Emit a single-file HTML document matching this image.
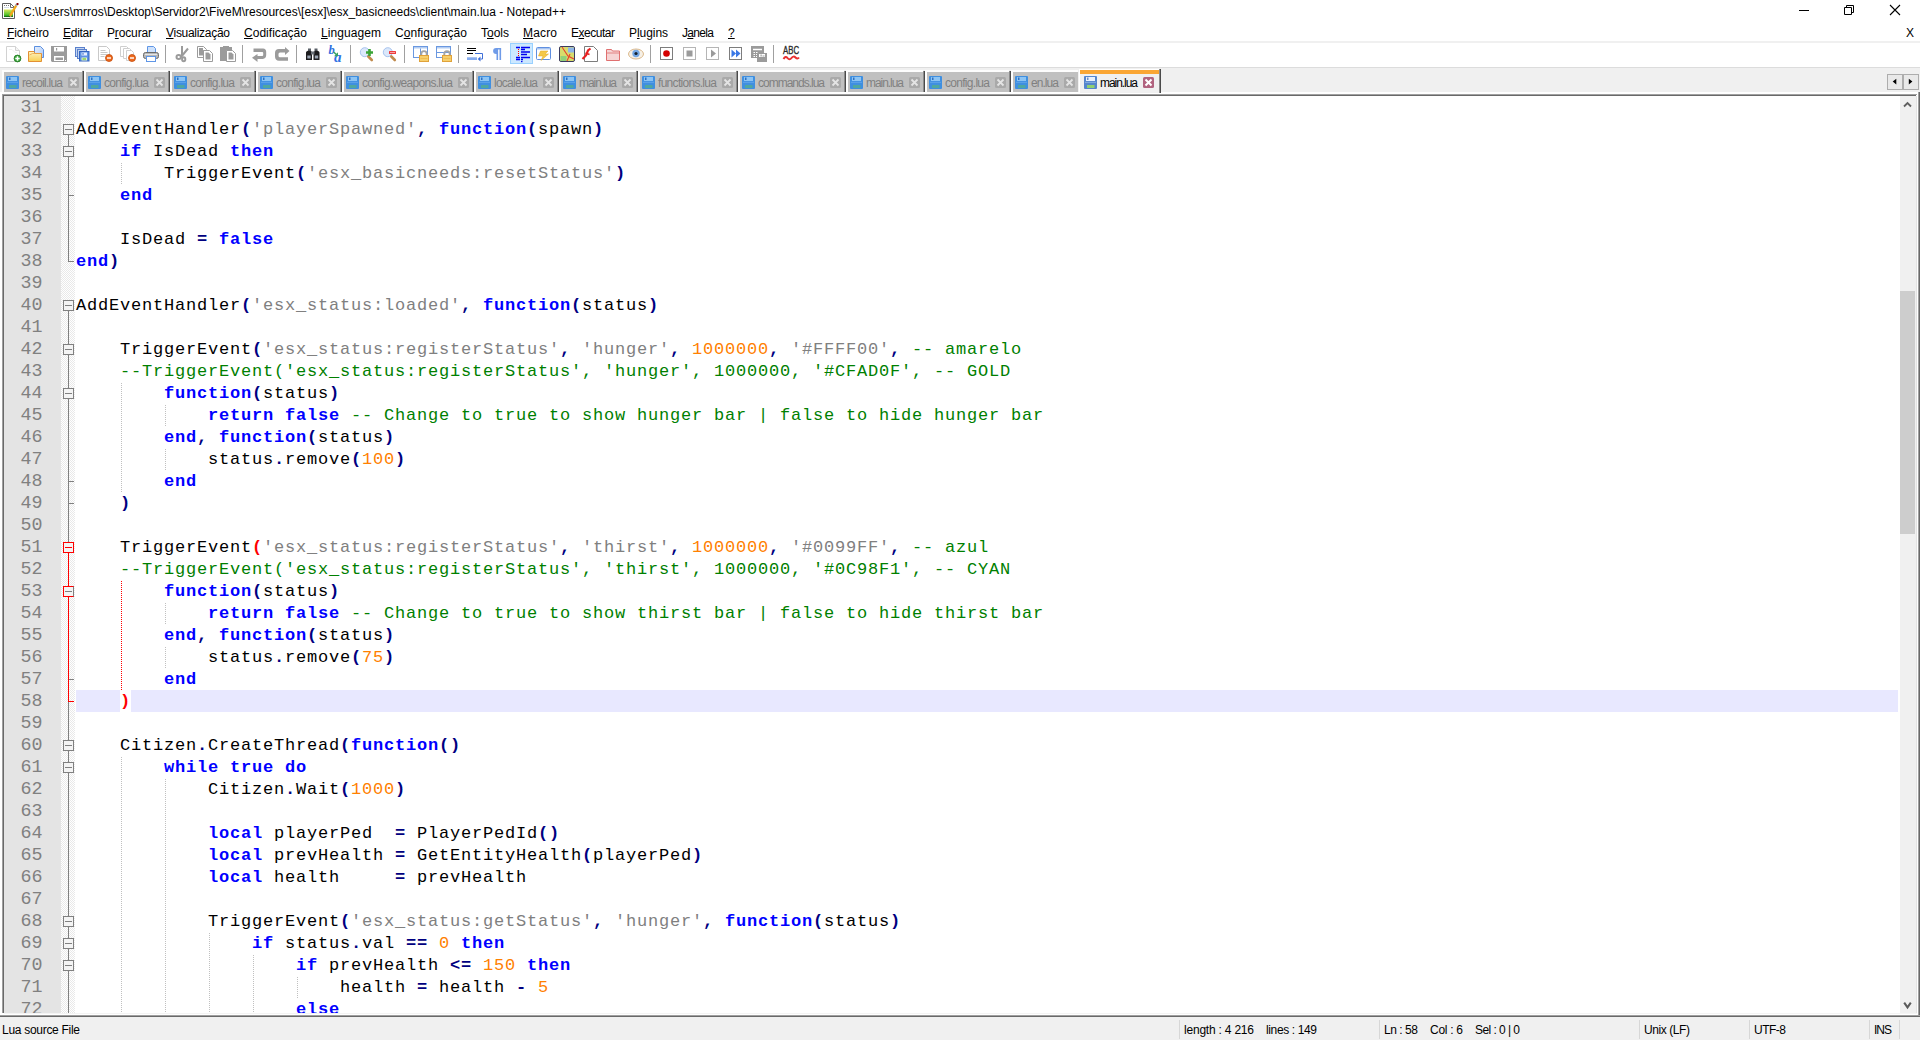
<!DOCTYPE html>
<html><head><meta charset="utf-8"><title>Notepad++</title>
<style>
*{margin:0;padding:0;box-sizing:border-box}
html,body{width:1920px;height:1040px;overflow:hidden;background:#fff}
body{position:relative;font-family:"Liberation Sans",sans-serif;font-size:12px;color:#000}
.a{position:absolute}
.t{position:absolute;white-space:pre;line-height:1}
.ui{font-family:"Liberation Sans",sans-serif;font-size:12px;color:#000}
.tabt{font-family:"Liberation Sans",sans-serif;font-size:12px;color:#808080}
u{text-decoration:underline;text-underline-offset:1px}
.code{position:absolute;left:76px;white-space:pre;font-family:"Liberation Mono",monospace;font-size:17px;line-height:22px;height:22px;color:#000;letter-spacing:0.798px}
.ln{position:absolute;left:4px;width:38.6px;text-align:right;white-space:pre;font-family:"Liberation Mono",monospace;font-size:18.333px;line-height:22px;height:22px;color:#808080}
.k{color:#0000ff;font-weight:bold}
.o{color:#000080;font-weight:bold}
.s{color:#808080}
.n{color:#ff8000}
.c{color:#008000}
.b{color:#ff0000;font-weight:bold}
.ig{position:absolute;width:1px;background-image:repeating-linear-gradient(to bottom,transparent 0,transparent 1px,#c0c0c0 1px,#c0c0c0 2px)}
.igr{position:absolute;width:1px;background-image:repeating-linear-gradient(to bottom,transparent 0,transparent 1px,#ff0000 1px,#ff0000 2px)}
.fb{position:absolute;left:63px;width:11px;height:11px;border:1px solid #808080;background:#f4f4f4}
.fb i{position:absolute;left:1px;top:4px;width:7px;height:1px;background:#808080}
.fbr{border-color:#ff0000}
.fbr i{background:#ff0000}
.fbh{border-color:#ff0000 #808080 #ff0000 #ff0000}
.fv{position:absolute;left:68px;width:1px;background:#808080}
.fh{position:absolute;left:69px;width:5px;height:1px;background:#808080}
.tab{position:absolute;top:72px;height:20px;background:#c0c0c0}
.tx{position:absolute;width:11px;height:11px;top:77px;background:#a9a9a9;border-radius:1.5px}
.sep{position:absolute;top:45px;width:1px;height:18px;background:#a0a0a0}
.ssep{position:absolute;top:1020px;width:1px;height:19px;background:#d7d7d7}
</style></head>
<body>
<!-- title bar -->
<svg class="a" style="left:2px;top:3px" width="17" height="16" viewBox="0 0 17 16"><defs><linearGradient id="gg" x1="0" y1="0" x2="0" y2="1"><stop offset="0" stop-color="#dbe85a"/><stop offset=".75" stop-color="#4cc02a"/><stop offset="1" stop-color="#0a5a0a"/></linearGradient></defs><path d="M0.500 0.500h8l4 4v11h-12z" fill="#fff" stroke="#5c5c5c"/><path d="M8.500 0.500L12.500 4.500H8.500Z" fill="#fff" stroke="#5c5c5c" stroke-width=".9"/><path d="M2 2.500h1M4 2.500h1M6 2.500h1" stroke="#777" stroke-width="1"/><path d="M2 4.500h5" stroke="#d5e0ea"/><rect x="2" y="6.500" width="9" height="7.500" fill="url(#gg)"/><path d="M14.500 2l-6.500 11" stroke="#f2a81a" stroke-width="2.400"/><path d="M8.500 12.500l-1 2.200l2-1.300z" fill="#c8a070"/><path d="M14 2.600l.8-1.300" stroke="#9ab0d8" stroke-width="2.200"/><rect x="14.500" y="0" width="2" height="2" rx=".5" fill="#8c0000"/></svg>
<div class="t ui" style="left:23px;top:6px;letter-spacing:0.001px;">C:\Users\mrros\Desktop\Servidor2\FiveM\resources\[esx]\esx_basicneeds\client\main.lua - Notepad++</div>
<div class="a" style="left:1799px;top:10px;width:10px;height:1px;background:#000"></div>
<svg class="a" style="left:1843px;top:4px" width="12" height="12" viewBox="0 0 12 12"><path d="M1.5 3.5h7v7h-7zM3.5 3.5v-2h7v7h-2" fill="none" stroke="#000" stroke-width="1"/></svg>
<svg class="a" style="left:1889px;top:4px" width="12" height="12" viewBox="0 0 12 12"><path d="M1 1l10 10M11 1L1 11" fill="none" stroke="#000" stroke-width="1.1"/></svg>
<!-- menu bar -->
<div class="t ui" style="left:7px;top:27px;letter-spacing:-0.100px;"><u>F</u>icheiro</div>
<div class="t ui" style="left:63px;top:27px;letter-spacing:-0.272px;"><u>E</u>ditar</div>
<div class="t ui" style="left:107px;top:27px;letter-spacing:-0.147px;">P<u>r</u>ocurar</div>
<div class="t ui" style="left:166px;top:27px;letter-spacing:-0.288px;"><u>V</u>isualização</div>
<div class="t ui" style="left:244px;top:27px;letter-spacing:0.028px;"><u>C</u>odificação</div>
<div class="t ui" style="left:321px;top:27px;letter-spacing:0.074px;"><u>L</u>inguagem</div>
<div class="t ui" style="left:395px;top:27px;letter-spacing:0.054px;">C<u>o</u>nfiguração</div>
<div class="t ui" style="left:481px;top:27px;letter-spacing:-0.008px;">T<u>o</u>ols</div>
<div class="t ui" style="left:523px;top:27px;letter-spacing:0.164px;"><u>M</u>acro</div>
<div class="t ui" style="left:571px;top:27px;letter-spacing:-0.482px;">E<u>x</u>ecutar</div>
<div class="t ui" style="left:629px;top:27px;letter-spacing:-0.062px;">P<u>l</u>ugins</div>
<div class="t ui" style="left:682px;top:27px;letter-spacing:-0.675px;">J<u>a</u>nela</div>
<div class="t ui" style="left:728px;top:27px;letter-spacing:0.000px;"><u>?</u></div>
<div class="t ui" style="left:1906px;top:27px;letter-spacing:0.000px;">X</div>
<div class="a" style="left:0;top:41px;width:1920px;height:2px;background:#f0f0f0"></div>
<!-- toolbar -->
<div class="a" style="left:0;top:67px;width:1920px;height:1px;background:#dcdcdc"></div>
<div class="a" style="left:0;top:68px;width:1920px;height:27px;background:#f0f0f0"></div>
<svg class="a" style="left:6px;top:46px;overflow:visible" width="16" height="16" viewBox="0 0 16 16"><path d="M0.500 0.500h9l4 4v11h-13z" fill="#fff" stroke="#d2d2d2"/><path d="M9.500 0.500v4h4" fill="#f4f4f4" stroke="#d2d2d2"/><path d="M3 3.500h3l3 3h2" fill="none" stroke="#efefef"/><circle cx="11.500" cy="12.500" r="3.400" fill="#3aa93a" stroke="#257a25" stroke-width=".9"/><path d="M11.500 10.300v4.400M9.300 12.500h4.400" stroke="#fff" stroke-width="1.500"/></svg>
<svg class="a" style="left:28px;top:46px;overflow:visible" width="16" height="16" viewBox="0 0 16 16"><defs><linearGradient id="fo" x1="0" y1="0" x2="0" y2="1"><stop offset="0" stop-color="#fdf3c4"/><stop offset="1" stop-color="#f8cf52"/></linearGradient><linearGradient id="pp" x1="0" y1="0" x2="1" y2="1"><stop offset="0" stop-color="#e6effc"/><stop offset="1" stop-color="#a9c6f5"/></linearGradient></defs><path d="M6.500 0.500h6l3 3v8h-9z" fill="url(#pp)" stroke="#5a8fe0"/><path d="M0.500 5.500h5.500l1 2h6.500v8h-13z" fill="url(#fo)" stroke="#e39033"/><path d="M1.500 9l3-1.500h8" fill="none" stroke="#eaa64a" stroke-width=".8"/></svg>
<svg class="a" style="left:51px;top:46px;overflow:visible" width="16" height="16" viewBox="0 0 16 16"><path d="M0 0h16v16h-15l-1-1z" fill="#9b9b9b"/><rect x="3" y="1" width="10" height="4.500" fill="#fff"/><rect x="5" y="2" width="1.200" height="2.500" fill="#9b9b9b"/><rect x="3" y="10" width="10" height="5" fill="#fff"/><rect x="4.500" y="11.500" width="7.500" height="2.500" fill="#9b9b9b"/><rect x="14" y="14" width="1" height="1" fill="#fff"/></svg>
<svg class="a" style="left:75px;top:46px;overflow:visible" width="16" height="16" viewBox="0 0 16 16"><rect x="0.500" y="1.500" width="9" height="9" fill="#c3d4f0" stroke="#5a80cc"/><rect x="2.500" y="3.500" width="9" height="9" fill="#c3d4f0" stroke="#5a80cc"/><rect x="4.500" y="5.500" width="9.500" height="9.500" fill="#5f93e4" stroke="#3464c0"/><rect x="6.500" y="6.500" width="5.500" height="3" fill="#e8f0ff"/><rect x="7.500" y="7" width="1" height="1.800" fill="#3464c0"/><rect x="6.500" y="11.500" width="5.500" height="3" fill="#e4f4c8"/><rect x="7.500" y="12.300" width="3.500" height="1.400" fill="#7cc84a"/></svg>
<svg class="a" style="left:97px;top:46px;overflow:visible" width="16" height="16" viewBox="0 0 16 16"><path d="M1.500 0.500h8l3 3v11h-11z" fill="#fff" stroke="#c9c9c9"/><path d="M3.500 4.500h5M3.500 6.500h7M3.500 8.500h7M3.500 10.500h4" stroke="#c8c8c8"/><circle cx="12" cy="12" r="3.500" fill="#ee6a1e" stroke="#c24a0a" stroke-width=".8"/><path d="M10 12h4" stroke="#fff" stroke-width="1.400"/></svg>
<svg class="a" style="left:120px;top:46px;overflow:visible" width="16" height="16" viewBox="0 0 16 16"><path d="M0.500 0.500h6l2 2v8h-8z" fill="#fff" stroke="#cfcfcf"/><path d="M3.500 2.500h6l2 2v8h-8z" fill="#fff" stroke="#cfcfcf"/><path d="M6.500 4.500h5l2 2v8h-7z" fill="#fff" stroke="#cfcfcf"/><circle cx="12" cy="12" r="3.500" fill="#ee6a1e" stroke="#c24a0a" stroke-width=".8"/><path d="M10 12h4" stroke="#fff" stroke-width="1.400"/></svg>
<svg class="a" style="left:143px;top:46px;overflow:visible" width="16" height="16" viewBox="0 0 16 16"><path d="M4.500 6v-5.500h6l2 2v3.500" fill="#cfe2fb" stroke="#5f96e6"/><rect x="0.500" y="6.500" width="15" height="6" rx="2" fill="#b8b8b8" stroke="#6c6c6c"/><rect x="3.500" y="10.500" width="9" height="5" fill="#fff" stroke="#5f96e6"/><path d="M2 8.500h12" stroke="#e6e6e6"/></svg>
<div class="sep" style="left:165px"></div>
<svg class="a" style="left:175px;top:46px;overflow:visible" width="16" height="16" viewBox="0 0 16 16"><path d="M7 0v9.500M13 2.500l-7 8.500" stroke="#9b9b9b" stroke-width="2" fill="none"/><ellipse cx="3.700" cy="11" rx="2.200" ry="2" fill="#fff" stroke="#9b9b9b" stroke-width="2"/><ellipse cx="8.700" cy="13.300" rx="1.600" ry="2" fill="#fff" stroke="#9b9b9b" stroke-width="2"/></svg>
<svg class="a" style="left:197px;top:46px;overflow:visible" width="16" height="16" viewBox="0 0 16 16"><path d="M0.500 0.500h6l3 3v8h-9z" fill="#fff" stroke="#9b9b9b"/><path d="M2 2h4v2h2v5.500h-6z" fill="#9b9b9b"/><path d="M6.500 4.500h6l3 3v8h-9z" fill="#fff" stroke="#9b9b9b"/><path d="M8.500 6.500h3l2 2v5h-5z" fill="#9b9b9b"/></svg>
<svg class="a" style="left:220px;top:46px;overflow:visible" width="16" height="16" viewBox="0 0 16 16"><path d="M0 1h3v-1h6v1h3v14h-12z" fill="#9b9b9b"/><path d="M6.500 4.500h6l3 3v8h-9z" fill="#fff" stroke="#9b9b9b"/><path d="M8.500 6.500h3l2 2v5h-5z" fill="#9b9b9b"/></svg>
<div class="sep" style="left:242px"></div>
<svg class="a" style="left:252px;top:46px;overflow:visible" width="16" height="16" viewBox="0 0 16 16"><path d="M1.500 2.500h9.500a3.500 3.500 0 0 1 3.200 3.500v3a4 4 0 0 1-3.500 4h-5.700v-3h5.200a1 1 0 0 0 1-1v-2a1 1 0 0 0-1-1h-8.700z" fill="#9b9b9b"/><path d="M5.500 8v8l-5.500-4.300z" fill="#9b9b9b"/></svg>
<svg class="a" style="left:275px;top:46px;overflow:visible" width="16" height="16" viewBox="0 0 16 16"><path d="M10 3h-6a4 4 0 0 0-4 4v3.500a4.300 4.300 0 0 0 4 4.300h9v-3.600h-8a1.500 1.500 0 0 1-1.500-1.500v-1.700a1.500 1.500 0 0 1 1.500-1.500h5z" fill="#9b9b9b"/><path d="M10 0.900v8l4.500-4z" fill="#9b9b9b"/></svg>
<div class="sep" style="left:296px"></div>
<svg class="a" style="left:306px;top:46px;overflow:visible" width="16" height="16" viewBox="0 0 16 16"><path d="M2 2.500h3v2.500h-3zM8.500 2.500h3v2.500h-3z" fill="#5a6068"/><path d="M0 6.500c0-2.500 6-2.500 6 0v7.500h-6zM7.500 6.500c0-2.500 6-2.500 6 0v7.500h-6z" fill="#1c1c1e"/><rect x="5" y="5.500" width="3.500" height="3" fill="#6a7078"/><rect x="1.300" y="9.500" width="3.400" height="3" fill="#9aa4b2"/><rect x="8.800" y="9.500" width="3.400" height="3" fill="#9aa4b2"/></svg>
<svg class="a" style="left:329px;top:46px;overflow:visible" width="16" height="16" viewBox="0 0 16 16"><text x="-0.500" y="8" font-family="Liberation Serif" font-size="12.500" font-weight="bold" font-style="italic" fill="#2f6fe0">b</text><text x="5" y="15.800" font-family="Liberation Serif" font-size="15" font-weight="bold" font-style="italic" fill="#2f72e4">a</text><path d="M4.500 6l3.500 3" stroke="#3aa060" stroke-width="1.600"/><path d="M9 6.300v4h-4z" fill="#3aa060"/></svg>
<div class="sep" style="left:350px"></div>
<svg class="a" style="left:360px;top:46px;overflow:visible" width="16" height="16" viewBox="0 0 16 16"><circle cx="4.800" cy="6.200" r="4.500" fill="#dbe8fb" stroke="#a8c4ee"/><path d="M8.300 10.500l3.500 3.500" stroke="#c08a4c" stroke-width="2.600" stroke-linecap="round"/><path d="M9.500 3v7M6 6.500h7" stroke="#3aa436" stroke-width="2.600"/></svg>
<svg class="a" style="left:383px;top:46px;overflow:visible" width="16" height="16" viewBox="0 0 16 16"><circle cx="4.800" cy="6.200" r="4.500" fill="#dbe8fb" stroke="#a8c4ee"/><path d="M8.300 10.500l3.500 3.500" stroke="#c08a4c" stroke-width="2.600" stroke-linecap="round"/><rect x="6" y="5" width="7" height="3" rx=".5" fill="#ee3a3a"/><path d="M7 6.500h5" stroke="#f6a0a0" stroke-width="1"/></svg>
<div class="sep" style="left:404px"></div>
<svg class="a" style="left:413px;top:46px;overflow:visible" width="16" height="16" viewBox="0 0 16 16"><rect x="0.500" y="0.500" width="14" height="11" fill="#fff" stroke="#6a98e0"/><rect x="1" y="1" width="13" height="1.500" fill="#b4cdf2"/><path d="M7.500 2.500v9" stroke="#6a98e0"/><path d="M8.300 10v-2.200a2.700 2.700 0 0 1 5.400 0v2.200" fill="none" stroke="#a4a4a4" stroke-width="1.900"/><rect x="6.500" y="9.500" width="9" height="6" fill="#f6cf6c" stroke="#e0a23a"/><path d="M7.500 12.500h7" stroke="#f0bc50" stroke-width="1"/></svg>
<svg class="a" style="left:436px;top:46px;overflow:visible" width="16" height="16" viewBox="0 0 16 16"><rect x="0.500" y="0.500" width="14" height="11" fill="#fff" stroke="#6a98e0"/><rect x="1" y="1" width="13" height="1.500" fill="#b4cdf2"/><path d="M1 6.500h13" stroke="#6a98e0"/><path d="M8.300 10v-2.200a2.700 2.700 0 0 1 5.400 0v2.200" fill="none" stroke="#a4a4a4" stroke-width="1.900"/><rect x="6.500" y="9.500" width="9" height="6" fill="#f6cf6c" stroke="#e0a23a"/><path d="M7.500 12.500h7" stroke="#f0bc50" stroke-width="1"/></svg>
<div class="sep" style="left:458px"></div>
<svg class="a" style="left:467px;top:46px;overflow:visible" width="16" height="16" viewBox="0 0 16 16"><g transform="translate(-1,0)"><path d="M1 2.500h9M1 4.500h9M1 7.500h6" stroke="#000" stroke-width="1"/><path d="M9 7.500h7.500v5.500h-2" fill="none" stroke="#3f6fd8"/><path d="M14.500 10.500v5l-2.800-2.500z" fill="#3f6fd8"/><rect x="1" y="11.300" width="10" height="2.700" fill="#86acee"/></g></svg>
<svg class="a" style="left:491px;top:46px;overflow:visible" width="16" height="16" viewBox="0 0 16 16"><path d="M6.300 2.500v11.500M9.300 2.500v11.500" stroke="#6f9be8" stroke-width="1.600"/><path d="M10.100 2h-5a3 3 0 0 0 0 6h1.300v-4.500h3.700z" fill="#6f9be8"/></svg>
<div class="a" style="left:510px;top:43px;width:23px;height:21px;background:#cce8ff;border:1px solid #99d1ff"></div>
<svg class="a" style="left:513px;top:46px;overflow:visible" width="16" height="16" viewBox="0 0 16 16"><g transform="translate(2,0)"><path d="M1 1.500h4M6 1.500h9M6 3.500h4M6 6h9M6 8.500h6M1 11.500h4M6 11.500h9M1 13.500h4M6 13.500h2" stroke="#0000f0" stroke-width="1.500"/><path d="M3.500 3v8" stroke="#f00" stroke-dasharray="1 1"/><rect x="6" y="15" width="1.500" height="1.200" fill="#0000f0"/></g></svg>
<svg class="a" style="left:536px;top:46px;overflow:visible" width="16" height="16" viewBox="0 0 16 16"><rect x="0.500" y="1.500" width="14" height="12" rx="1" fill="#fff" stroke="#5f8fe0"/><rect x="1" y="2" width="13" height="1.500" fill="#a8c4f0"/><path d="M4.500 5h7.500l-3 3h3.500l-7.500 6.500l2-4.500h-4.500z" fill="#f4c848" stroke="#e0a828" stroke-width=".5"/></svg>
<svg class="a" style="left:559px;top:46px;overflow:visible" width="16" height="16" viewBox="0 0 16 16"><rect x="0.500" y="0.500" width="15" height="15" rx="1.500" fill="#d7dc6c" stroke="#3a3a60"/><rect x="9" y="1.500" width="6" height="5" fill="#8fb6e8"/><rect x="1.500" y="10" width="6" height="5" fill="#8fd07a"/><path d="M3 1l6 9l6 3M11 8l-3 7" stroke="#e8402c" stroke-width="1.100" fill="none"/></svg>
<svg class="a" style="left:582px;top:46px;overflow:visible" width="16" height="16" viewBox="0 0 16 16"><path d="M2.500 0.500h9l4 4v11h-13z" fill="#fff" stroke="#7c7c7c"/><path d="M0.500 13l3.500-3.500l2-5l2.500-2" fill="none" stroke="#e82020" stroke-width="2.200"/><path d="M3.500 7l4 1.500" stroke="#e82020" stroke-width="1.500"/></svg>
<svg class="a" style="left:605px;top:46px;overflow:visible" width="16" height="16" viewBox="0 0 16 16"><path d="M1.500 3.500h5l1 1.500h7v9.500h-13z" fill="#f6d4d4" stroke="#e07070"/><path d="M1.500 7h13" stroke="#e07070" stroke-width=".8"/></svg>
<svg class="a" style="left:628px;top:46px;overflow:visible" width="16" height="16" viewBox="0 0 16 16"><ellipse cx="8" cy="8" rx="7.500" ry="5" fill="#f6f0e6" stroke="#dcb98c"/><circle cx="8" cy="7.500" r="3.700" fill="#74a7e4"/><circle cx="8" cy="7.500" r="1.600" fill="#15202c"/></svg>
<div class="sep" style="left:650px"></div>
<svg class="a" style="left:659px;top:46px;overflow:visible" width="16" height="16" viewBox="0 0 16 16"><rect x="1.500" y="1.500" width="12" height="12" fill="#fff" stroke="#7d7d7d" stroke-width="1"/><circle cx="7.500" cy="7.500" r="3.300" fill="#d40000"/></svg>
<svg class="a" style="left:682px;top:46px;overflow:visible" width="16" height="16" viewBox="0 0 16 16"><rect x="1.500" y="1.500" width="12" height="12" fill="#fff" stroke="#b5b5b5" stroke-width="1"/><rect x="4.500" y="4.500" width="6" height="6" fill="#9b9b9b"/></svg>
<svg class="a" style="left:705px;top:46px;overflow:visible" width="16" height="16" viewBox="0 0 16 16"><rect x="1.500" y="1.500" width="12" height="12" fill="#fff" stroke="#b5b5b5" stroke-width="1"/><path d="M6 3.500v8l5-4z" fill="#9b9b9b"/></svg>
<svg class="a" style="left:728px;top:46px;overflow:visible" width="16" height="16" viewBox="0 0 16 16"><rect x="1.500" y="1.500" width="12" height="12" fill="#fff" stroke="#7d7d7d" stroke-width="1"/><path d="M3.500 3.500v8l4.500-4zM8 3.500v8l4.500-4z" fill="#3a78e6"/></svg>
<svg class="a" style="left:751px;top:46px;overflow:visible" width="16" height="16" viewBox="0 0 16 16"><rect x="0" y="0" width="13" height="12" fill="#9b9b9b"/><path d="M2 3.500h9" stroke="#fff" stroke-width="1.500"/><path d="M2.500 6.500h1.500M5 6.500h1.500M2.500 8.500h1.500M5 8.500h1.500M2.500 10.500h1.500M5 10.500h1.500" stroke="#fff" stroke-width="1.200"/><rect x="6" y="7" width="10" height="9" fill="#9b9b9b"/><rect x="8" y="8" width="6" height="3" fill="#fff"/><rect x="9.500" y="8.500" width="1.200" height="2" fill="#9b9b9b"/><rect x="11.500" y="9.500" width="2" height="1" fill="#9b9b9b"/></svg>
<div class="sep" style="left:773px"></div>
<svg class="a" style="left:783px;top:46px;overflow:visible" width="16" height="16" viewBox="0 0 16 16"><text x="0" y="8.300" font-family="Liberation Sans" font-size="11.500" fill="#2a2a2a" stroke="#2a2a2a" stroke-width=".35" textLength="16" lengthAdjust="spacingAndGlyphs">ABC</text><path d="M0.500 13q2-3.500 4 -1t4 0t4-0.500t3.500 0" fill="none" stroke="#e83030" stroke-width="2"/></svg>
<!-- tabs -->
<div class="tab" style="left:4px;width:78px"></div><div class="a" style="left:2px;top:70px;width:80px;height:2px;background:#fdfdfd"></div><div class="a" style="left:2px;top:70px;width:2px;height:22px;background:#fdfdfd"></div><div class="a" style="left:82px;top:71px;width:1px;height:21px;background:#8c8c8c"></div><div class="a" style="left:83px;top:71px;width:1px;height:21px;background:#4a4a4a"></div><svg class="a" style="left:6px;top:76px" width="13" height="13" viewBox="0 0 13 13"><rect x="0" y="0" width="13" height="13" rx="1" fill="#3f8fe0"/><rect x="2" y="1" width="9" height="4" fill="#8cc4f4"/><rect x="3" y="1.5" width="1.5" height="2.5" fill="#2f6fc0"/><rect x="3" y="9" width="7.500" height="3" fill="#4fa7a0"/><rect x="1" y="5.800" width="11" height="1.200" fill="#5aa0e8"/></svg>
<div class="t tabt" style="left:22px;top:77px;letter-spacing:-0.781px;">recoil.lua</div>
<div class="tx" style="left:68px"></div><svg class="a" style="left:68px;top:77px" width="11" height="11" viewBox="0 0 11 11"><path d="M2.5 2.5l6 6M8.500 2.5l-6 6" stroke="#e4e4e4" stroke-width="1.8" fill="none"/></svg>
<div class="tab" style="left:86px;width:82px"></div><div class="a" style="left:84px;top:70px;width:84px;height:2px;background:#fdfdfd"></div><div class="a" style="left:84px;top:70px;width:2px;height:22px;background:#fdfdfd"></div><div class="a" style="left:168px;top:71px;width:1px;height:21px;background:#8c8c8c"></div><div class="a" style="left:169px;top:71px;width:1px;height:21px;background:#4a4a4a"></div><svg class="a" style="left:88px;top:76px" width="13" height="13" viewBox="0 0 13 13"><rect x="0" y="0" width="13" height="13" rx="1" fill="#3f8fe0"/><rect x="2" y="1" width="9" height="4" fill="#8cc4f4"/><rect x="3" y="1.5" width="1.5" height="2.5" fill="#2f6fc0"/><rect x="3" y="9" width="7.500" height="3" fill="#4fa7a0"/><rect x="1" y="5.800" width="11" height="1.200" fill="#5aa0e8"/></svg>
<div class="t tabt" style="left:104px;top:77px;letter-spacing:-0.708px;">config.lua</div>
<div class="tx" style="left:154px"></div><svg class="a" style="left:154px;top:77px" width="11" height="11" viewBox="0 0 11 11"><path d="M2.5 2.5l6 6M8.500 2.5l-6 6" stroke="#e4e4e4" stroke-width="1.8" fill="none"/></svg>
<div class="tab" style="left:172px;width:82px"></div><div class="a" style="left:170px;top:70px;width:84px;height:2px;background:#fdfdfd"></div><div class="a" style="left:170px;top:70px;width:2px;height:22px;background:#fdfdfd"></div><div class="a" style="left:254px;top:71px;width:1px;height:21px;background:#8c8c8c"></div><div class="a" style="left:255px;top:71px;width:1px;height:21px;background:#4a4a4a"></div><svg class="a" style="left:174px;top:76px" width="13" height="13" viewBox="0 0 13 13"><rect x="0" y="0" width="13" height="13" rx="1" fill="#3f8fe0"/><rect x="2" y="1" width="9" height="4" fill="#8cc4f4"/><rect x="3" y="1.5" width="1.5" height="2.5" fill="#2f6fc0"/><rect x="3" y="9" width="7.500" height="3" fill="#4fa7a0"/><rect x="1" y="5.800" width="11" height="1.200" fill="#5aa0e8"/></svg>
<div class="t tabt" style="left:190px;top:77px;letter-spacing:-0.708px;">config.lua</div>
<div class="tx" style="left:240px"></div><svg class="a" style="left:240px;top:77px" width="11" height="11" viewBox="0 0 11 11"><path d="M2.5 2.5l6 6M8.500 2.5l-6 6" stroke="#e4e4e4" stroke-width="1.8" fill="none"/></svg>
<div class="tab" style="left:258px;width:82px"></div><div class="a" style="left:256px;top:70px;width:84px;height:2px;background:#fdfdfd"></div><div class="a" style="left:256px;top:70px;width:2px;height:22px;background:#fdfdfd"></div><div class="a" style="left:340px;top:71px;width:1px;height:21px;background:#8c8c8c"></div><div class="a" style="left:341px;top:71px;width:1px;height:21px;background:#4a4a4a"></div><svg class="a" style="left:260px;top:76px" width="13" height="13" viewBox="0 0 13 13"><rect x="0" y="0" width="13" height="13" rx="1" fill="#3f8fe0"/><rect x="2" y="1" width="9" height="4" fill="#8cc4f4"/><rect x="3" y="1.5" width="1.5" height="2.5" fill="#2f6fc0"/><rect x="3" y="9" width="7.500" height="3" fill="#4fa7a0"/><rect x="1" y="5.800" width="11" height="1.200" fill="#5aa0e8"/></svg>
<div class="t tabt" style="left:276px;top:77px;letter-spacing:-0.708px;">config.lua</div>
<div class="tx" style="left:326px"></div><svg class="a" style="left:326px;top:77px" width="11" height="11" viewBox="0 0 11 11"><path d="M2.5 2.5l6 6M8.500 2.5l-6 6" stroke="#e4e4e4" stroke-width="1.8" fill="none"/></svg>
<div class="tab" style="left:344px;width:128px"></div><div class="a" style="left:342px;top:70px;width:130px;height:2px;background:#fdfdfd"></div><div class="a" style="left:342px;top:70px;width:2px;height:22px;background:#fdfdfd"></div><div class="a" style="left:472px;top:71px;width:1px;height:21px;background:#8c8c8c"></div><div class="a" style="left:473px;top:71px;width:1px;height:21px;background:#4a4a4a"></div><svg class="a" style="left:346px;top:76px" width="13" height="13" viewBox="0 0 13 13"><rect x="0" y="0" width="13" height="13" rx="1" fill="#3f8fe0"/><rect x="2" y="1" width="9" height="4" fill="#8cc4f4"/><rect x="3" y="1.5" width="1.5" height="2.5" fill="#2f6fc0"/><rect x="3" y="9" width="7.500" height="3" fill="#4fa7a0"/><rect x="1" y="5.800" width="11" height="1.200" fill="#5aa0e8"/></svg>
<div class="t tabt" style="left:362px;top:77px;letter-spacing:-0.691px;">config.weapons.lua</div>
<div class="tx" style="left:458px"></div><svg class="a" style="left:458px;top:77px" width="11" height="11" viewBox="0 0 11 11"><path d="M2.5 2.5l6 6M8.500 2.5l-6 6" stroke="#e4e4e4" stroke-width="1.8" fill="none"/></svg>
<div class="tab" style="left:476px;width:81px"></div><div class="a" style="left:474px;top:70px;width:83px;height:2px;background:#fdfdfd"></div><div class="a" style="left:474px;top:70px;width:2px;height:22px;background:#fdfdfd"></div><div class="a" style="left:557px;top:71px;width:1px;height:21px;background:#8c8c8c"></div><div class="a" style="left:558px;top:71px;width:1px;height:21px;background:#4a4a4a"></div><svg class="a" style="left:478px;top:76px" width="13" height="13" viewBox="0 0 13 13"><rect x="0" y="0" width="13" height="13" rx="1" fill="#3f8fe0"/><rect x="2" y="1" width="9" height="4" fill="#8cc4f4"/><rect x="3" y="1.5" width="1.5" height="2.5" fill="#2f6fc0"/><rect x="3" y="9" width="7.500" height="3" fill="#4fa7a0"/><rect x="1" y="5.800" width="11" height="1.200" fill="#5aa0e8"/></svg>
<div class="t tabt" style="left:494px;top:77px;letter-spacing:-0.745px;">locale.lua</div>
<div class="tx" style="left:543px"></div><svg class="a" style="left:543px;top:77px" width="11" height="11" viewBox="0 0 11 11"><path d="M2.5 2.5l6 6M8.500 2.5l-6 6" stroke="#e4e4e4" stroke-width="1.8" fill="none"/></svg>
<div class="tab" style="left:561px;width:75px"></div><div class="a" style="left:559px;top:70px;width:77px;height:2px;background:#fdfdfd"></div><div class="a" style="left:559px;top:70px;width:2px;height:22px;background:#fdfdfd"></div><div class="a" style="left:636px;top:71px;width:1px;height:21px;background:#8c8c8c"></div><div class="a" style="left:637px;top:71px;width:1px;height:21px;background:#4a4a4a"></div><svg class="a" style="left:563px;top:76px" width="13" height="13" viewBox="0 0 13 13"><rect x="0" y="0" width="13" height="13" rx="1" fill="#3f8fe0"/><rect x="2" y="1" width="9" height="4" fill="#8cc4f4"/><rect x="3" y="1.5" width="1.5" height="2.5" fill="#2f6fc0"/><rect x="3" y="9" width="7.500" height="3" fill="#4fa7a0"/><rect x="1" y="5.800" width="11" height="1.200" fill="#5aa0e8"/></svg>
<div class="t tabt" style="left:579px;top:77px;letter-spacing:-1.051px;">main.lua</div>
<div class="tx" style="left:622px"></div><svg class="a" style="left:622px;top:77px" width="11" height="11" viewBox="0 0 11 11"><path d="M2.5 2.5l6 6M8.500 2.5l-6 6" stroke="#e4e4e4" stroke-width="1.8" fill="none"/></svg>
<div class="tab" style="left:640px;width:96px"></div><div class="a" style="left:638px;top:70px;width:98px;height:2px;background:#fdfdfd"></div><div class="a" style="left:638px;top:70px;width:2px;height:22px;background:#fdfdfd"></div><div class="a" style="left:736px;top:71px;width:1px;height:21px;background:#8c8c8c"></div><div class="a" style="left:737px;top:71px;width:1px;height:21px;background:#4a4a4a"></div><svg class="a" style="left:642px;top:76px" width="13" height="13" viewBox="0 0 13 13"><rect x="0" y="0" width="13" height="13" rx="1" fill="#3f8fe0"/><rect x="2" y="1" width="9" height="4" fill="#8cc4f4"/><rect x="3" y="1.5" width="1.5" height="2.5" fill="#2f6fc0"/><rect x="3" y="9" width="7.500" height="3" fill="#4fa7a0"/><rect x="1" y="5.800" width="11" height="1.200" fill="#5aa0e8"/></svg>
<div class="t tabt" style="left:658px;top:77px;letter-spacing:-0.699px;">functions.lua</div>
<div class="tx" style="left:722px"></div><svg class="a" style="left:722px;top:77px" width="11" height="11" viewBox="0 0 11 11"><path d="M2.5 2.5l6 6M8.500 2.5l-6 6" stroke="#e4e4e4" stroke-width="1.8" fill="none"/></svg>
<div class="tab" style="left:740px;width:104px"></div><div class="a" style="left:738px;top:70px;width:106px;height:2px;background:#fdfdfd"></div><div class="a" style="left:738px;top:70px;width:2px;height:22px;background:#fdfdfd"></div><div class="a" style="left:844px;top:71px;width:1px;height:21px;background:#8c8c8c"></div><div class="a" style="left:845px;top:71px;width:1px;height:21px;background:#4a4a4a"></div><svg class="a" style="left:742px;top:76px" width="13" height="13" viewBox="0 0 13 13"><rect x="0" y="0" width="13" height="13" rx="1" fill="#3f8fe0"/><rect x="2" y="1" width="9" height="4" fill="#8cc4f4"/><rect x="3" y="1.5" width="1.5" height="2.5" fill="#2f6fc0"/><rect x="3" y="9" width="7.500" height="3" fill="#4fa7a0"/><rect x="1" y="5.800" width="11" height="1.200" fill="#5aa0e8"/></svg>
<div class="t tabt" style="left:758px;top:77px;letter-spacing:-1.004px;">commands.lua</div>
<div class="tx" style="left:830px"></div><svg class="a" style="left:830px;top:77px" width="11" height="11" viewBox="0 0 11 11"><path d="M2.5 2.5l6 6M8.500 2.5l-6 6" stroke="#e4e4e4" stroke-width="1.8" fill="none"/></svg>
<div class="tab" style="left:848px;width:75px"></div><div class="a" style="left:846px;top:70px;width:77px;height:2px;background:#fdfdfd"></div><div class="a" style="left:846px;top:70px;width:2px;height:22px;background:#fdfdfd"></div><div class="a" style="left:923px;top:71px;width:1px;height:21px;background:#8c8c8c"></div><div class="a" style="left:924px;top:71px;width:1px;height:21px;background:#4a4a4a"></div><svg class="a" style="left:850px;top:76px" width="13" height="13" viewBox="0 0 13 13"><rect x="0" y="0" width="13" height="13" rx="1" fill="#3f8fe0"/><rect x="2" y="1" width="9" height="4" fill="#8cc4f4"/><rect x="3" y="1.5" width="1.5" height="2.5" fill="#2f6fc0"/><rect x="3" y="9" width="7.500" height="3" fill="#4fa7a0"/><rect x="1" y="5.800" width="11" height="1.200" fill="#5aa0e8"/></svg>
<div class="t tabt" style="left:866px;top:77px;letter-spacing:-1.051px;">main.lua</div>
<div class="tx" style="left:909px"></div><svg class="a" style="left:909px;top:77px" width="11" height="11" viewBox="0 0 11 11"><path d="M2.5 2.5l6 6M8.500 2.5l-6 6" stroke="#e4e4e4" stroke-width="1.8" fill="none"/></svg>
<div class="tab" style="left:927px;width:82px"></div><div class="a" style="left:925px;top:70px;width:84px;height:2px;background:#fdfdfd"></div><div class="a" style="left:925px;top:70px;width:2px;height:22px;background:#fdfdfd"></div><div class="a" style="left:1009px;top:71px;width:1px;height:21px;background:#8c8c8c"></div><div class="a" style="left:1010px;top:71px;width:1px;height:21px;background:#4a4a4a"></div><svg class="a" style="left:929px;top:76px" width="13" height="13" viewBox="0 0 13 13"><rect x="0" y="0" width="13" height="13" rx="1" fill="#3f8fe0"/><rect x="2" y="1" width="9" height="4" fill="#8cc4f4"/><rect x="3" y="1.5" width="1.5" height="2.5" fill="#2f6fc0"/><rect x="3" y="9" width="7.500" height="3" fill="#4fa7a0"/><rect x="1" y="5.800" width="11" height="1.200" fill="#5aa0e8"/></svg>
<div class="t tabt" style="left:945px;top:77px;letter-spacing:-0.708px;">config.lua</div>
<div class="tx" style="left:995px"></div><svg class="a" style="left:995px;top:77px" width="11" height="11" viewBox="0 0 11 11"><path d="M2.5 2.5l6 6M8.500 2.5l-6 6" stroke="#e4e4e4" stroke-width="1.8" fill="none"/></svg>
<div class="tab" style="left:1013px;width:65px"></div><div class="a" style="left:1011px;top:70px;width:67px;height:2px;background:#fdfdfd"></div><div class="a" style="left:1011px;top:70px;width:2px;height:22px;background:#fdfdfd"></div><svg class="a" style="left:1015px;top:76px" width="13" height="13" viewBox="0 0 13 13"><rect x="0" y="0" width="13" height="13" rx="1" fill="#3f8fe0"/><rect x="2" y="1" width="9" height="4" fill="#8cc4f4"/><rect x="3" y="1.5" width="1.5" height="2.5" fill="#2f6fc0"/><rect x="3" y="9" width="7.500" height="3" fill="#4fa7a0"/><rect x="1" y="5.800" width="11" height="1.200" fill="#5aa0e8"/></svg>
<div class="t tabt" style="left:1031px;top:77px;letter-spacing:-0.941px;">en.lua</div>
<div class="tx" style="left:1064px"></div><svg class="a" style="left:1064px;top:77px" width="11" height="11" viewBox="0 0 11 11"><path d="M2.5 2.5l6 6M8.500 2.5l-6 6" stroke="#e4e4e4" stroke-width="1.8" fill="none"/></svg>
<div class="a" style="left:1079px;top:69px;width:80px;height:24px;background:#f0f0f0;border-left:1px solid #fff;border-top:1px solid #fff"></div><div class="a" style="left:1080px;top:70px;width:79px;height:4px;background:#faa634"></div><div class="a" style="left:1159px;top:69px;width:1px;height:24px;background:#8c8c8c"></div><div class="a" style="left:1160px;top:69px;width:1px;height:24px;background:#4a4a4a"></div><svg class="a" style="left:1084px;top:76px" width="13" height="13" viewBox="0 0 13 13"><rect x="0" y="0" width="13" height="13" rx="1" fill="#5585cc"/><rect x="2" y="1" width="9" height="4" fill="#e8f0fc"/><rect x="3" y="1.5" width="1.5" height="2.5" fill="#7090c8"/><rect x="3" y="9" width="7.500" height="3" fill="#8fd070"/><rect x="1" y="5.800" width="11" height="1.200" fill="#7fa8e0"/></svg>
<div class="t tabt" style="left:1100px;top:77px;letter-spacing:-1.051px;color:#000;">main.lua</div>
<div class="tx" style="left:1143px;background:#b1637f"></div><svg class="a" style="left:1143px;top:77px" width="11" height="11" viewBox="0 0 11 11"><path d="M2.5 2.5l6 6M8.500 2.5l-6 6" stroke="#fff" stroke-width="2" fill="none"/></svg>
<div class="a" style="left:1887px;top:74px;width:16px;height:16px;background:#e9e9e9;border:1px solid #adadad"></div><svg class="a" style="left:1887px;top:74px" width="16" height="16" viewBox="0 0 16 16"><path d="M9.3 4.700v5.800l-3.600-2.900z" fill="#000"/></svg>
<div class="a" style="left:1903px;top:74px;width:16px;height:16px;background:#e9e9e9;border:1px solid #adadad"></div><svg class="a" style="left:1903px;top:74px" width="16" height="16" viewBox="0 0 16 16"><path d="M5.800 4.700v5.800l3.600-2.900z" fill="#000"/></svg>
<!-- editor frame -->
<div class="a" style="left:0;top:92px;width:1920px;height:925px;background:#fff"></div><div class="a" style="left:1080px;top:92px;width:79px;height:1px;background:#f0f0f0"></div><div class="a" style="left:1159px;top:92px;width:1px;height:1px;background:#8c8c8c"></div><div class="a" style="left:1160px;top:92px;width:1px;height:1px;background:#4a4a4a"></div><div class="a" style="left:2px;top:94px;width:1915px;height:1px;background:#a0a0a0"></div><div class="a" style="left:3px;top:95px;width:1913px;height:1px;background:#696969"></div><div class="a" style="left:2px;top:94px;width:1px;height:919px;background:#a0a0a0"></div><div class="a" style="left:3px;top:95px;width:1px;height:918px;background:#696969"></div><div class="a" style="left:1916px;top:96px;width:1px;height:917px;background:#e3e3e3"></div><div class="a" style="left:1918px;top:92px;width:1px;height:925px;background:#a0a0a0"></div><div class="a" style="left:1919px;top:92px;width:1px;height:925px;background:#696969"></div><div class="a" style="left:4px;top:1013px;width:1913px;height:1px;background:#f4f4f4"></div><div class="a" style="left:0px;top:1015px;width:1920px;height:1px;background:#a0a0a0"></div><div class="a" style="left:0px;top:1016px;width:1920px;height:1px;background:#696969"></div><div class="a" style="left:4px;top:96px;width:57px;height:917px;background:#e4e4e4"></div><div class="a" style="left:61px;top:96px;width:14px;height:917px;background:#fff;background-image:linear-gradient(45deg,#e9e9e9 25%,transparent 25%,transparent 75%,#e9e9e9 75%),linear-gradient(45deg,#e9e9e9 25%,transparent 25%,transparent 75%,#e9e9e9 75%);background-size:2px 2px;background-position:0 0,1px 1px"></div>
<div class="a" style="left:1900px;top:96px;width:16px;height:917px;background:#f0f0f0"></div><div class="a" style="left:1900px;top:291px;width:15px;height:243px;background:#cdcdcd"></div><svg class="a" style="left:1900px;top:96px" width="16" height="17" viewBox="0 0 16 17"><path d="M4 10.5l3.500-3.500l3.500 3.500" fill="none" stroke="#606060" stroke-width="1.800"/></svg><svg class="a" style="left:1900px;top:996px" width="16" height="17" viewBox="0 0 16 17"><path d="M4.200 6.600L7.500 11.400L10.800 6.600" fill="none" stroke="#5a5a5a" stroke-width="2"/></svg>
<!-- code -->
<div class="a" style="left:4px;top:96px;width:1896px;height:917px;overflow:hidden">
<div class="a" style="left:72px;top:594px;width:1822px;height:22px;background:#e8e8ff"></div><div class="a" style="left:116px;top:594px;width:11px;height:22px;background:#fff"></div>
<div class="ln" style="left:0;top:1px">31</div>
<div class="ln" style="left:0;top:23px">32</div><div class="code" style="left:72px;top:23px">AddEventHandler<span class="o">(</span><span class="s">&#x27;playerSpawned&#x27;</span><span class="o">,</span> <span class="k">function</span><span class="o">(</span>spawn<span class="o">)</span></div>
<div class="ln" style="left:0;top:45px">33</div><div class="code" style="left:72px;top:45px">    <span class="k">if</span> IsDead <span class="k">then</span></div>
<div class="ln" style="left:0;top:67px">34</div><div class="code" style="left:72px;top:67px">        TriggerEvent<span class="o">(</span><span class="s">&#x27;esx_basicneeds:resetStatus&#x27;</span><span class="o">)</span></div><div class="ig" style="left:117px;top:66px;height:22px"></div>
<div class="ln" style="left:0;top:89px">35</div><div class="code" style="left:72px;top:89px">    <span class="k">end</span></div>
<div class="ln" style="left:0;top:111px">36</div>
<div class="ln" style="left:0;top:133px">37</div><div class="code" style="left:72px;top:133px">    IsDead <span class="o">=</span> <span class="k">false</span></div>
<div class="ln" style="left:0;top:155px">38</div><div class="code" style="left:72px;top:155px"><span class="k">end</span><span class="o">)</span></div>
<div class="ln" style="left:0;top:177px">39</div>
<div class="ln" style="left:0;top:199px">40</div><div class="code" style="left:72px;top:199px">AddEventHandler<span class="o">(</span><span class="s">&#x27;esx_status:loaded&#x27;</span><span class="o">,</span> <span class="k">function</span><span class="o">(</span>status<span class="o">)</span></div>
<div class="ln" style="left:0;top:221px">41</div>
<div class="ln" style="left:0;top:243px">42</div><div class="code" style="left:72px;top:243px">    TriggerEvent<span class="o">(</span><span class="s">&#x27;esx_status:registerStatus&#x27;</span><span class="o">,</span> <span class="s">&#x27;hunger&#x27;</span><span class="o">,</span> <span class="n">1000000</span><span class="o">,</span> <span class="s">&#x27;#FFFF00&#x27;</span><span class="o">,</span> <span class="c">-- amarelo</span></div>
<div class="ln" style="left:0;top:265px">43</div><div class="code" style="left:72px;top:265px">    <span class="c">--TriggerEvent(&#x27;esx_status:registerStatus&#x27;, &#x27;hunger&#x27;, 1000000, &#x27;#CFAD0F&#x27;, -- GOLD</span></div>
<div class="ln" style="left:0;top:287px">44</div><div class="code" style="left:72px;top:287px">        <span class="k">function</span><span class="o">(</span>status<span class="o">)</span></div><div class="ig" style="left:117px;top:286px;height:22px"></div>
<div class="ln" style="left:0;top:309px">45</div><div class="code" style="left:72px;top:309px">            <span class="k">return</span> <span class="k">false</span> <span class="c">-- Change to true to show hunger bar | false to hide hunger bar</span></div><div class="ig" style="left:117px;top:308px;height:22px"></div><div class="ig" style="left:161px;top:308px;height:22px"></div>
<div class="ln" style="left:0;top:331px">46</div><div class="code" style="left:72px;top:331px">        <span class="k">end</span><span class="o">,</span> <span class="k">function</span><span class="o">(</span>status<span class="o">)</span></div><div class="ig" style="left:117px;top:330px;height:22px"></div>
<div class="ln" style="left:0;top:353px">47</div><div class="code" style="left:72px;top:353px">            status<span class="o">.</span>remove<span class="o">(</span><span class="n">100</span><span class="o">)</span></div><div class="ig" style="left:117px;top:352px;height:22px"></div><div class="ig" style="left:161px;top:352px;height:22px"></div>
<div class="ln" style="left:0;top:375px">48</div><div class="code" style="left:72px;top:375px">        <span class="k">end</span></div><div class="ig" style="left:117px;top:374px;height:22px"></div>
<div class="ln" style="left:0;top:397px">49</div><div class="code" style="left:72px;top:397px">    <span class="o">)</span></div>
<div class="ln" style="left:0;top:419px">50</div>
<div class="ln" style="left:0;top:441px">51</div><div class="code" style="left:72px;top:441px">    TriggerEvent<span class="b">(</span><span class="s">&#x27;esx_status:registerStatus&#x27;</span><span class="o">,</span> <span class="s">&#x27;thirst&#x27;</span><span class="o">,</span> <span class="n">1000000</span><span class="o">,</span> <span class="s">&#x27;#0099FF&#x27;</span><span class="o">,</span> <span class="c">-- azul</span></div>
<div class="ln" style="left:0;top:463px">52</div><div class="code" style="left:72px;top:463px">    <span class="c">--TriggerEvent(&#x27;esx_status:registerStatus&#x27;, &#x27;thirst&#x27;, 1000000, &#x27;#0C98F1&#x27;, -- CYAN</span></div>
<div class="ln" style="left:0;top:485px">53</div><div class="code" style="left:72px;top:485px">        <span class="k">function</span><span class="o">(</span>status<span class="o">)</span></div><div class="igr" style="left:117px;top:484px;height:22px"></div>
<div class="ln" style="left:0;top:507px">54</div><div class="code" style="left:72px;top:507px">            <span class="k">return</span> <span class="k">false</span> <span class="c">-- Change to true to show thirst bar | false to hide thirst bar</span></div><div class="igr" style="left:117px;top:506px;height:22px"></div><div class="ig" style="left:161px;top:506px;height:22px"></div>
<div class="ln" style="left:0;top:529px">55</div><div class="code" style="left:72px;top:529px">        <span class="k">end</span><span class="o">,</span> <span class="k">function</span><span class="o">(</span>status<span class="o">)</span></div><div class="igr" style="left:117px;top:528px;height:22px"></div>
<div class="ln" style="left:0;top:551px">56</div><div class="code" style="left:72px;top:551px">            status<span class="o">.</span>remove<span class="o">(</span><span class="n">75</span><span class="o">)</span></div><div class="igr" style="left:117px;top:550px;height:22px"></div><div class="ig" style="left:161px;top:550px;height:22px"></div>
<div class="ln" style="left:0;top:573px">57</div><div class="code" style="left:72px;top:573px">        <span class="k">end</span></div><div class="igr" style="left:117px;top:572px;height:22px"></div>
<div class="ln" style="left:0;top:595px">58</div><div class="code" style="left:72px;top:595px">    <span class="b">)</span></div>
<div class="ln" style="left:0;top:617px">59</div>
<div class="ln" style="left:0;top:639px">60</div><div class="code" style="left:72px;top:639px">    Citizen<span class="o">.</span>CreateThread<span class="o">(</span><span class="k">function</span><span class="o">()</span></div>
<div class="ln" style="left:0;top:661px">61</div><div class="code" style="left:72px;top:661px">        <span class="k">while</span> <span class="k">true</span> <span class="k">do</span></div><div class="ig" style="left:117px;top:660px;height:22px"></div>
<div class="ln" style="left:0;top:683px">62</div><div class="code" style="left:72px;top:683px">            Citizen<span class="o">.</span>Wait<span class="o">(</span><span class="n">1000</span><span class="o">)</span></div><div class="ig" style="left:117px;top:682px;height:22px"></div><div class="ig" style="left:161px;top:682px;height:22px"></div>
<div class="ln" style="left:0;top:705px">63</div><div class="ig" style="left:117px;top:704px;height:22px"></div><div class="ig" style="left:161px;top:704px;height:22px"></div>
<div class="ln" style="left:0;top:727px">64</div><div class="code" style="left:72px;top:727px">            <span class="k">local</span> playerPed  <span class="o">=</span> PlayerPedId<span class="o">()</span></div><div class="ig" style="left:117px;top:726px;height:22px"></div><div class="ig" style="left:161px;top:726px;height:22px"></div>
<div class="ln" style="left:0;top:749px">65</div><div class="code" style="left:72px;top:749px">            <span class="k">local</span> prevHealth <span class="o">=</span> GetEntityHealth<span class="o">(</span>playerPed<span class="o">)</span></div><div class="ig" style="left:117px;top:748px;height:22px"></div><div class="ig" style="left:161px;top:748px;height:22px"></div>
<div class="ln" style="left:0;top:771px">66</div><div class="code" style="left:72px;top:771px">            <span class="k">local</span> health     <span class="o">=</span> prevHealth</div><div class="ig" style="left:117px;top:770px;height:22px"></div><div class="ig" style="left:161px;top:770px;height:22px"></div>
<div class="ln" style="left:0;top:793px">67</div><div class="ig" style="left:117px;top:792px;height:22px"></div><div class="ig" style="left:161px;top:792px;height:22px"></div>
<div class="ln" style="left:0;top:815px">68</div><div class="code" style="left:72px;top:815px">            TriggerEvent<span class="o">(</span><span class="s">&#x27;esx_status:getStatus&#x27;</span><span class="o">,</span> <span class="s">&#x27;hunger&#x27;</span><span class="o">,</span> <span class="k">function</span><span class="o">(</span>status<span class="o">)</span></div><div class="ig" style="left:117px;top:814px;height:22px"></div><div class="ig" style="left:161px;top:814px;height:22px"></div>
<div class="ln" style="left:0;top:837px">69</div><div class="code" style="left:72px;top:837px">                <span class="k">if</span> status<span class="o">.</span>val <span class="o">==</span> <span class="n">0</span> <span class="k">then</span></div><div class="ig" style="left:117px;top:836px;height:22px"></div><div class="ig" style="left:161px;top:836px;height:22px"></div><div class="ig" style="left:205px;top:836px;height:22px"></div>
<div class="ln" style="left:0;top:859px">70</div><div class="code" style="left:72px;top:859px">                    <span class="k">if</span> prevHealth <span class="o">&lt;=</span> <span class="n">150</span> <span class="k">then</span></div><div class="ig" style="left:117px;top:858px;height:22px"></div><div class="ig" style="left:161px;top:858px;height:22px"></div><div class="ig" style="left:205px;top:858px;height:22px"></div><div class="ig" style="left:249px;top:858px;height:22px"></div>
<div class="ln" style="left:0;top:881px">71</div><div class="code" style="left:72px;top:881px">                        health <span class="o">=</span> health <span class="o">-</span> <span class="n">5</span></div><div class="ig" style="left:117px;top:880px;height:22px"></div><div class="ig" style="left:161px;top:880px;height:22px"></div><div class="ig" style="left:205px;top:880px;height:22px"></div><div class="ig" style="left:249px;top:880px;height:22px"></div><div class="ig" style="left:293px;top:880px;height:22px"></div>
<div class="ln" style="left:0;top:903px">72</div><div class="code" style="left:72px;top:903px">                    <span class="k">else</span></div><div class="ig" style="left:117px;top:902px;height:22px"></div><div class="ig" style="left:161px;top:902px;height:22px"></div><div class="ig" style="left:205px;top:902px;height:22px"></div><div class="ig" style="left:249px;top:902px;height:22px"></div>
<div class="fv" style="left:64px;top:39px;height:127px"></div><div class="fh" style="left:65px;top:99px"></div><div class="fh" style="left:65px;top:165px"></div><div class="fb" style="left:59px;top:28px"><i></i></div><div class="fb" style="left:59px;top:50px"><i></i></div><div class="fv" style="left:64px;top:215px;height:231px"></div><div class="fv" style="left:64px;top:446px;height:160px;background:#ff0000"></div><div class="fv" style="left:64px;top:606px;height:314px"></div><div class="fh" style="left:65px;top:385px"></div><div class="fh" style="left:65px;top:407px"></div><div class="fh" style="left:65px;top:583px"></div><div class="fh" style="left:65px;top:605px;background:#ff0000"></div><div class="fb" style="left:59px;top:204px"><i></i></div><div class="fb" style="left:59px;top:248px"><i></i></div><div class="fb" style="left:59px;top:292px"><i></i></div><div class="fb" style="left:59px;top:644px"><i></i></div><div class="fb" style="left:59px;top:666px"><i></i></div><div class="fb" style="left:59px;top:820px"><i></i></div><div class="fb" style="left:59px;top:842px"><i></i></div><div class="fb" style="left:59px;top:864px"><i></i></div><div class="fb fbr" style="left:59px;top:446px"><i></i></div><div class="fb fbh" style="left:59px;top:490px"><i></i></div>
</div>
<!-- status bar -->
<div class="a" style="left:0;top:1017px;width:1920px;height:23px;background:#f0f0f0"></div><div class="ssep" style="left:1179px"></div><div class="ssep" style="left:1379px"></div><div class="ssep" style="left:1639px"></div><div class="ssep" style="left:1749px"></div><div class="ssep" style="left:1869px"></div><div class="ssep" style="left:1899px"></div>
<div class="t ui" style="left:2px;top:1024px;letter-spacing:-0.289px;">Lua source File</div>
<div class="t ui" style="left:1184px;top:1024px;letter-spacing:-0.210px;">length : 4 216</div>
<div class="t ui" style="left:1266px;top:1024px;letter-spacing:-0.370px;">lines : 149</div>
<div class="t ui" style="left:1384px;top:1024px;letter-spacing:-0.451px;">Ln : 58</div>
<div class="t ui" style="left:1430px;top:1024px;letter-spacing:-0.281px;">Col : 6</div>
<div class="t ui" style="left:1475px;top:1024px;letter-spacing:-0.548px;">Sel : 0 | 0</div>
<div class="t ui" style="left:1644px;top:1024px;letter-spacing:-0.418px;">Unix (LF)</div>
<div class="t ui" style="left:1754px;top:1024px;letter-spacing:-0.500px;">UTF-8</div>
<div class="t ui" style="left:1874px;top:1024px;letter-spacing:-1.008px;">INS</div>
</body></html>
